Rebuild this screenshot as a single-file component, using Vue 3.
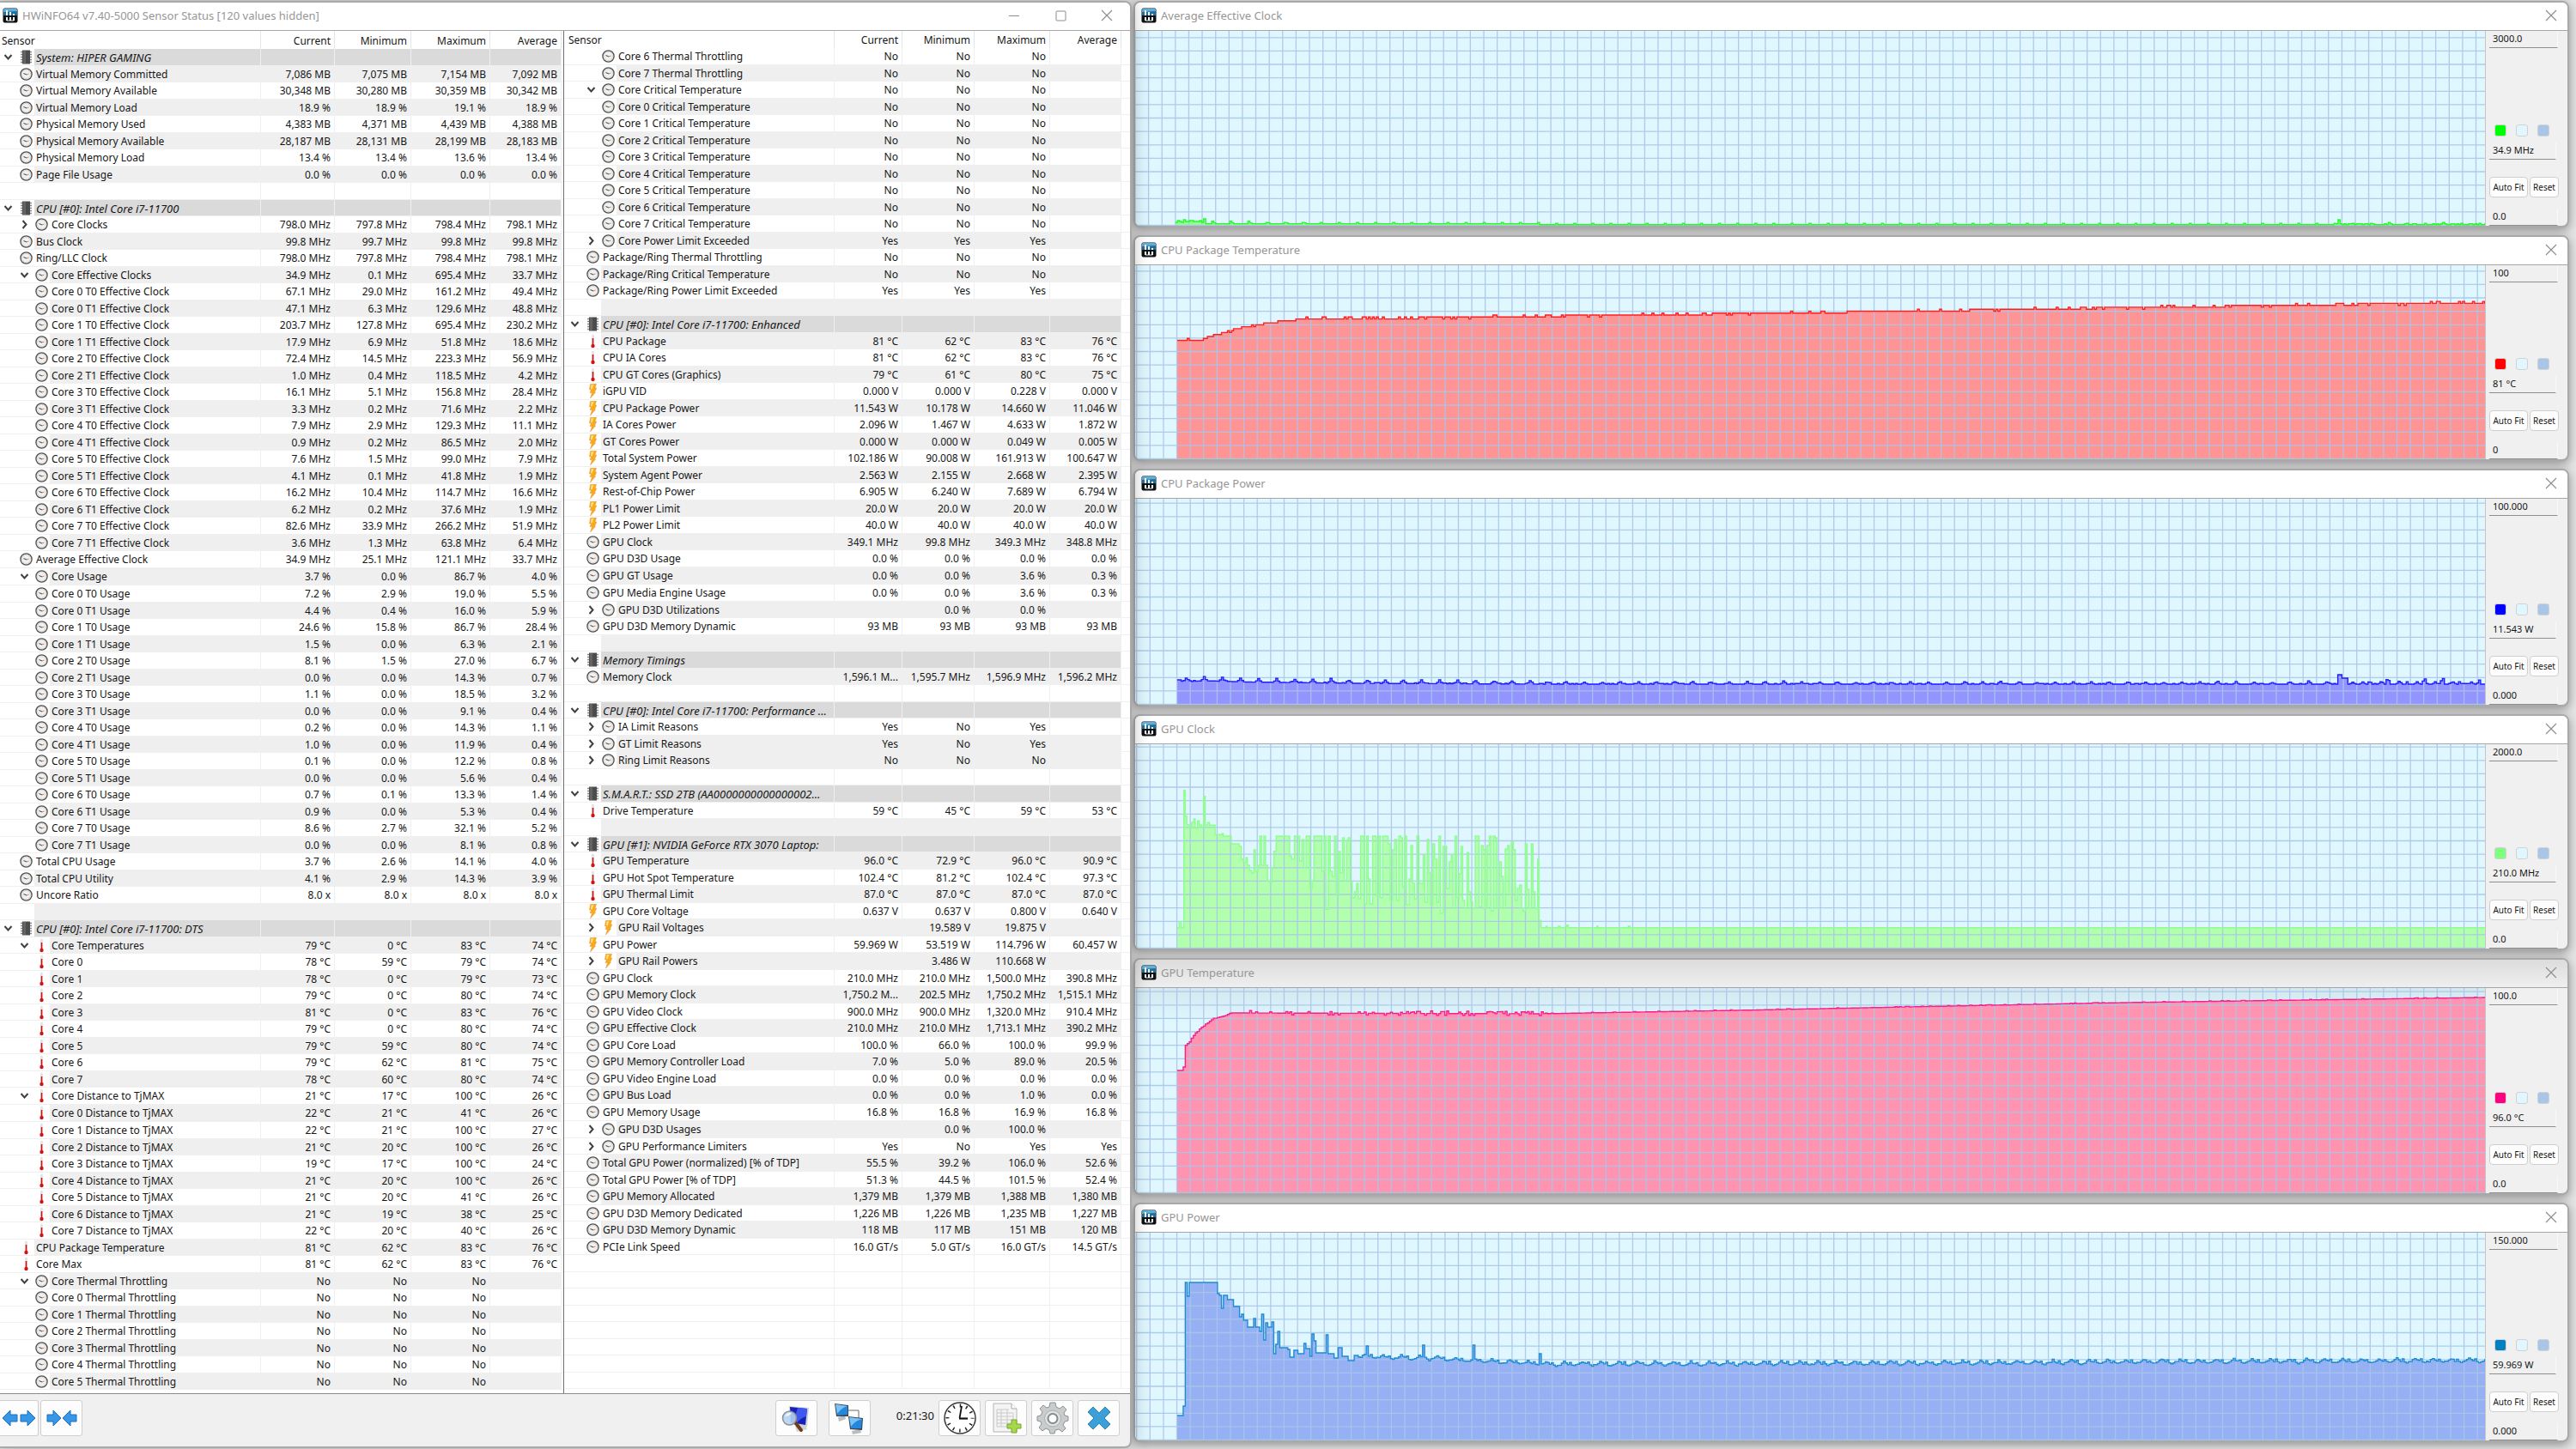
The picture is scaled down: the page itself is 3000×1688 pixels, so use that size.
<script setup>
import { h } from 'vue'

// Row notation: kind|name|current|minimum|maximum|average
// kind: H = sensor group, c/t/b = clock, thermometer, bolt icon,
// with a suffix for second-level rows: "+" leaf, ">" collapsed, "v" expanded
const leftSource = `H|System: HIPER GAMING
c|Virtual Memory Committed|7,086 MB|7,075 MB|7,154 MB|7,092 MB
c|Virtual Memory Available|30,348 MB|30,280 MB|30,359 MB|30,342 MB
c|Virtual Memory Load|18.9 %|18.9 %|19.1 %|18.9 %
c|Physical Memory Used|4,383 MB|4,371 MB|4,439 MB|4,388 MB
c|Physical Memory Available|28,187 MB|28,131 MB|28,199 MB|28,183 MB
c|Physical Memory Load|13.4 %|13.4 %|13.6 %|13.4 %
c|Page File Usage|0.0 %|0.0 %|0.0 %|0.0 %

H|CPU [#0]: Intel Core i7-11700
c>|Core Clocks|798.0 MHz|797.8 MHz|798.4 MHz|798.1 MHz
c|Bus Clock|99.8 MHz|99.7 MHz|99.8 MHz|99.8 MHz
c|Ring/LLC Clock|798.0 MHz|797.8 MHz|798.4 MHz|798.1 MHz
cv|Core Effective Clocks|34.9 MHz|0.1 MHz|695.4 MHz|33.7 MHz
c+|Core 0 T0 Effective Clock|67.1 MHz|29.0 MHz|161.2 MHz|49.4 MHz
c+|Core 0 T1 Effective Clock|47.1 MHz|6.3 MHz|129.6 MHz|48.8 MHz
c+|Core 1 T0 Effective Clock|203.7 MHz|127.8 MHz|695.4 MHz|230.2 MHz
c+|Core 1 T1 Effective Clock|17.9 MHz|6.9 MHz|51.8 MHz|18.6 MHz
c+|Core 2 T0 Effective Clock|72.4 MHz|14.5 MHz|223.3 MHz|56.9 MHz
c+|Core 2 T1 Effective Clock|1.0 MHz|0.4 MHz|118.5 MHz|4.2 MHz
c+|Core 3 T0 Effective Clock|16.1 MHz|5.1 MHz|156.8 MHz|28.4 MHz
c+|Core 3 T1 Effective Clock|3.3 MHz|0.2 MHz|71.6 MHz|2.2 MHz
c+|Core 4 T0 Effective Clock|7.9 MHz|2.9 MHz|129.3 MHz|11.1 MHz
c+|Core 4 T1 Effective Clock|0.9 MHz|0.2 MHz|86.5 MHz|2.0 MHz
c+|Core 5 T0 Effective Clock|7.6 MHz|1.5 MHz|99.0 MHz|7.9 MHz
c+|Core 5 T1 Effective Clock|4.1 MHz|0.1 MHz|41.8 MHz|1.9 MHz
c+|Core 6 T0 Effective Clock|16.2 MHz|10.4 MHz|114.7 MHz|16.6 MHz
c+|Core 6 T1 Effective Clock|6.2 MHz|0.2 MHz|37.6 MHz|1.9 MHz
c+|Core 7 T0 Effective Clock|82.6 MHz|33.9 MHz|266.2 MHz|51.9 MHz
c+|Core 7 T1 Effective Clock|3.6 MHz|1.3 MHz|63.8 MHz|6.4 MHz
c|Average Effective Clock|34.9 MHz|25.1 MHz|121.1 MHz|33.7 MHz
cv|Core Usage|3.7 %|0.0 %|86.7 %|4.0 %
c+|Core 0 T0 Usage|7.2 %|2.9 %|19.0 %|5.5 %
c+|Core 0 T1 Usage|4.4 %|0.4 %|16.0 %|5.9 %
c+|Core 1 T0 Usage|24.6 %|15.8 %|86.7 %|28.4 %
c+|Core 1 T1 Usage|1.5 %|0.0 %|6.3 %|2.1 %
c+|Core 2 T0 Usage|8.1 %|1.5 %|27.0 %|6.7 %
c+|Core 2 T1 Usage|0.0 %|0.0 %|14.3 %|0.7 %
c+|Core 3 T0 Usage|1.1 %|0.0 %|18.5 %|3.2 %
c+|Core 3 T1 Usage|0.0 %|0.0 %|9.1 %|0.4 %
c+|Core 4 T0 Usage|0.2 %|0.0 %|14.3 %|1.1 %
c+|Core 4 T1 Usage|1.0 %|0.0 %|11.9 %|0.4 %
c+|Core 5 T0 Usage|0.1 %|0.0 %|12.2 %|0.8 %
c+|Core 5 T1 Usage|0.0 %|0.0 %|5.6 %|0.4 %
c+|Core 6 T0 Usage|0.7 %|0.1 %|13.3 %|1.4 %
c+|Core 6 T1 Usage|0.9 %|0.0 %|5.3 %|0.4 %
c+|Core 7 T0 Usage|8.6 %|2.7 %|32.1 %|5.2 %
c+|Core 7 T1 Usage|0.0 %|0.0 %|8.1 %|0.8 %
c|Total CPU Usage|3.7 %|2.6 %|14.1 %|4.0 %
c|Total CPU Utility|4.1 %|2.9 %|14.3 %|3.9 %
c|Uncore Ratio|8.0 x|8.0 x|8.0 x|8.0 x

H|CPU [#0]: Intel Core i7-11700: DTS
tv|Core Temperatures|79 °C|0 °C|83 °C|74 °C
t+|Core 0|78 °C|59 °C|79 °C|74 °C
t+|Core 1|78 °C|0 °C|79 °C|73 °C
t+|Core 2|79 °C|0 °C|80 °C|74 °C
t+|Core 3|81 °C|0 °C|83 °C|76 °C
t+|Core 4|79 °C|0 °C|80 °C|74 °C
t+|Core 5|79 °C|59 °C|80 °C|74 °C
t+|Core 6|79 °C|62 °C|81 °C|75 °C
t+|Core 7|78 °C|60 °C|80 °C|74 °C
tv|Core Distance to TjMAX|21 °C|17 °C|100 °C|26 °C
t+|Core 0 Distance to TjMAX|22 °C|21 °C|41 °C|26 °C
t+|Core 1 Distance to TjMAX|22 °C|21 °C|100 °C|27 °C
t+|Core 2 Distance to TjMAX|21 °C|20 °C|100 °C|26 °C
t+|Core 3 Distance to TjMAX|19 °C|17 °C|100 °C|24 °C
t+|Core 4 Distance to TjMAX|21 °C|20 °C|100 °C|26 °C
t+|Core 5 Distance to TjMAX|21 °C|20 °C|41 °C|26 °C
t+|Core 6 Distance to TjMAX|21 °C|19 °C|38 °C|25 °C
t+|Core 7 Distance to TjMAX|22 °C|20 °C|40 °C|26 °C
t|CPU Package Temperature|81 °C|62 °C|83 °C|76 °C
t|Core Max|81 °C|62 °C|83 °C|76 °C
cv|Core Thermal Throttling|No|No|No|
c+|Core 0 Thermal Throttling|No|No|No|
c+|Core 1 Thermal Throttling|No|No|No|
c+|Core 2 Thermal Throttling|No|No|No|
c+|Core 3 Thermal Throttling|No|No|No|
c+|Core 4 Thermal Throttling|No|No|No|
c+|Core 5 Thermal Throttling|No|No|No|`

const rightSource = `c+|Core 6 Thermal Throttling|No|No|No|
c+|Core 7 Thermal Throttling|No|No|No|
cv|Core Critical Temperature|No|No|No|
c+|Core 0 Critical Temperature|No|No|No|
c+|Core 1 Critical Temperature|No|No|No|
c+|Core 2 Critical Temperature|No|No|No|
c+|Core 3 Critical Temperature|No|No|No|
c+|Core 4 Critical Temperature|No|No|No|
c+|Core 5 Critical Temperature|No|No|No|
c+|Core 6 Critical Temperature|No|No|No|
c+|Core 7 Critical Temperature|No|No|No|
c>|Core Power Limit Exceeded|Yes|Yes|Yes|
c|Package/Ring Thermal Throttling|No|No|No|
c|Package/Ring Critical Temperature|No|No|No|
c|Package/Ring Power Limit Exceeded|Yes|Yes|Yes|

H|CPU [#0]: Intel Core i7-11700: Enhanced
t|CPU Package|81 °C|62 °C|83 °C|76 °C
t|CPU IA Cores|81 °C|62 °C|83 °C|76 °C
t|CPU GT Cores (Graphics)|79 °C|61 °C|80 °C|75 °C
b|iGPU VID|0.000 V|0.000 V|0.228 V|0.000 V
b|CPU Package Power|11.543 W|10.178 W|14.660 W|11.046 W
b|IA Cores Power|2.096 W|1.467 W|4.633 W|1.872 W
b|GT Cores Power|0.000 W|0.000 W|0.049 W|0.005 W
b|Total System Power|102.186 W|90.008 W|161.913 W|100.647 W
b|System Agent Power|2.563 W|2.155 W|2.668 W|2.395 W
b|Rest-of-Chip Power|6.905 W|6.240 W|7.689 W|6.794 W
b|PL1 Power Limit|20.0 W|20.0 W|20.0 W|20.0 W
b|PL2 Power Limit|40.0 W|40.0 W|40.0 W|40.0 W
c|GPU Clock|349.1 MHz|99.8 MHz|349.3 MHz|348.8 MHz
c|GPU D3D Usage|0.0 %|0.0 %|0.0 %|0.0 %
c|GPU GT Usage|0.0 %|0.0 %|3.6 %|0.3 %
c|GPU Media Engine Usage|0.0 %|0.0 %|3.6 %|0.3 %
c>|GPU D3D Utilizations||0.0 %|0.0 %|
c|GPU D3D Memory Dynamic|93 MB|93 MB|93 MB|93 MB

H|Memory Timings
c|Memory Clock|1,596.1 M...|1,595.7 MHz|1,596.9 MHz|1,596.2 MHz

H|CPU [#0]: Intel Core i7-11700: Performance ...
c>|IA Limit Reasons|Yes|No|Yes|
c>|GT Limit Reasons|Yes|No|Yes|
c>|Ring Limit Reasons|No|No|No|

H|S.M.A.R.T.: SSD 2TB (AA0000000000000002...
t|Drive Temperature|59 °C|45 °C|59 °C|53 °C

H|GPU [#1]: NVIDIA GeForce RTX 3070 Laptop:
t|GPU Temperature|96.0 °C|72.9 °C|96.0 °C|90.9 °C
t|GPU Hot Spot Temperature|102.4 °C|81.2 °C|102.4 °C|97.3 °C
t|GPU Thermal Limit|87.0 °C|87.0 °C|87.0 °C|87.0 °C
b|GPU Core Voltage|0.637 V|0.637 V|0.800 V|0.640 V
b>|GPU Rail Voltages||19.589 V|19.875 V|
b|GPU Power|59.969 W|53.519 W|114.796 W|60.457 W
b>|GPU Rail Powers||3.486 W|110.668 W|
c|GPU Clock|210.0 MHz|210.0 MHz|1,500.0 MHz|390.8 MHz
c|GPU Memory Clock|1,750.2 M...|202.5 MHz|1,750.2 MHz|1,515.1 MHz
c|GPU Video Clock|900.0 MHz|900.0 MHz|1,320.0 MHz|910.4 MHz
c|GPU Effective Clock|210.0 MHz|210.0 MHz|1,713.1 MHz|390.2 MHz
c|GPU Core Load|100.0 %|66.0 %|100.0 %|99.9 %
c|GPU Memory Controller Load|7.0 %|5.0 %|89.0 %|20.5 %
c|GPU Video Engine Load|0.0 %|0.0 %|0.0 %|0.0 %
c|GPU Bus Load|0.0 %|0.0 %|1.0 %|0.0 %
c|GPU Memory Usage|16.8 %|16.8 %|16.9 %|16.8 %
c>|GPU D3D Usages||0.0 %|100.0 %|
c>|GPU Performance Limiters|Yes|No|Yes|Yes
c|Total GPU Power (normalized) [% of TDP]|55.5 %|39.2 %|106.0 %|52.6 %
c|Total GPU Power [% of TDP]|51.3 %|44.5 %|101.5 %|52.4 %
c|GPU Memory Allocated|1,379 MB|1,379 MB|1,388 MB|1,380 MB
c|GPU D3D Memory Dedicated|1,226 MB|1,226 MB|1,235 MB|1,227 MB
c|GPU D3D Memory Dynamic|118 MB|117 MB|151 MB|120 MB
c|PCIe Link Speed|16.0 GT/s|5.0 GT/s|16.0 GT/s|14.5 GT/s`

const ROWS = 80

// flipAt: row number from which the zebra striping is inverted (a hidden row sits there)
function parse(source, flipAt) {
  const rows = source.split('\n').map((line, i) => {
    const [kind = '', name = '', ...values] = line.split('|')
    const n = i + 1
    const even = n % 2 === 0
    while (values.length < 4) values.push('')
    return {
      group: kind === 'H',
      icon: { H: 'chip', c: 'clock', t: 'thermo', b: 'bolt' }[kind[0]] || '',
      nested: kind.length > 1,
      arrow: kind === 'H' || kind[1] === 'v' ? 'down' : kind[1] === '>' ? 'right' : '',
      name,
      values,
      striped: n >= flipAt ? !even : even,
    }
  })
  while (rows.length < ROWS) {
    rows.push({ group: false, icon: '', nested: false, arrow: '', name: '', values: ['', '', '', ''], striped: false })
  }
  return rows
}

const panes = [
  { id: 'left', rows: parse(leftSource, 999) },
  { id: 'right', rows: parse(rightSource, 43) },
]
const headings = ['Current', 'Minimum', 'Maximum', 'Average']

/* ---- graph traces ---- */
const PLOT_W = 1573
const CELL = 15.625
const STEP = 2.344

let seed = 7
function rand() {
  seed = (seed * 16807) % 2147483647
  return seed / 2147483647
}

function lerp(points, x) {
  for (let i = 1; i < points.length; i++) {
    const [x0, y0] = points[i - 1]
    const [x1, y1] = points[i]
    if (x <= x1) return y0 + ((y1 - y0) * (x - x0)) / (x1 - x0)
  }
  return points[points.length - 1][1]
}

function hold(steps, x) {
  let v = steps[0][1]
  for (const [sx, sv] of steps) {
    if (sx > x) break
    v = sv
  }
  return v
}

function sample(from, fn) {
  const out = []
  for (let i = 0, x = from; x < PLOT_W; i++, x = from + i * STEP) out.push([x, fn(x, i)])
  return out
}

const avgClock = sample(47, (x, i) => {
  if (x < 82) return x > 78 ? 8 : 4 + Math.round(rand() * 2) + (i === 4 ? 2 : 0)
  if (x > 1401 && x < 1404) return 7
  const base = x < 470 ? 2.4 : 1.2
  const peak = i % 9 === 0 ? (x < 150 ? 3 : 1.5) : 0
  return base + (i % 9 === 1 && x < 200 ? 1 : peak) + (x > 1395 && rand() > 0.6 ? 1 : 0)
})

const packageTemp = sample(49, (x) => {
  const base = lerp([[49, 61], [78, 61.2], [95, 64], [127, 68], [159, 70.2], [205, 72.4], [330, 72.5], [500, 73.5], [690, 74.6], [900, 76], [1100, 77.4], [1300, 78.7], [1500, 80], [1573, 80]], x)
  return Math.round(base + (rand() > 0.78 ? 0.5 : 0) - (rand() > 0.85 ? 0.4 : 0)) * 2.27
})

const packagePower = sample(49, (x, i) => {
  if (x < 52) return 29
  const base = lerp([[49, 26.5], [80, 28], [130, 26.5], [250, 25], [480, 24], [1573, 24]], x)
  const phase = i % 9
  const bump = phase === 4 ? 3 + rand() * 2 : phase === 5 || phase === 3 ? 1.5 : 0
  if (x > 1401 && x < 1404) return 35
  if (x > 1404 && x < 1412) return 31
  if (x > 1412 && phase > 6) return base + rand() * 7
  return base + (x > 480 ? bump * 0.6 : bump) + (rand() > 0.8 ? 0.8 : 0)
})

// Burst phase of the GPU clock: [time, level] in thirds of a unit, level counted down from 1003
const clockBurst = [
  [33, 930], [40, 910], [47, 930], [56, 450], [61, 540], [67, 571], [75, 583], [83, 562], [91, 550], [96, 583],
  [104, 557], [110, 571], [118, 577], [125, 471], [131, 572], [139, 563], [146, 572], [166, 605], [190, 601],
  [194, 610], [222, 637], [250, 646], [257, 690], [264, 700], [273, 685], [278, 712], [286, 730], [293, 739],
  [301, 658], [307, 733], [315, 712], [322, 610], [328, 712], [336, 610], [342, 712], [349, 766], [356, 772],
  [364, 723], [371, 663], [379, 610], [426, 680], [433, 691], [443, 610], [461, 697], [469, 622], [476, 721],
  [484, 610], [497, 793], [505, 766], [511, 610], [539, 733], [547, 610], [553, 866], [561, 610], [568, 733],
  [575, 751], [583, 610], [589, 814], [597, 664], [603, 739], [611, 616], [617, 766], [625, 625], [631, 616],
  [638, 772], [645, 825], [653, 804], [660, 775], [666, 829], [674, 610], [687, 847], [695, 610], [701, 760],
  [707, 847], [716, 610], [729, 817], [737, 610], [743, 825], [751, 610], [770, 637], [778, 835], [786, 658],
  [793, 622], [800, 835], [808, 610], [815, 616], [821, 787], [829, 610], [835, 850], [844, 760], [850, 643],
  [856, 775], [863, 829], [871, 610], [878, 775], [893, 676], [899, 841], [907, 622], [913, 739], [919, 850],
  [927, 637], [933, 691], [941, 841], [948, 610], [954, 880], [962, 646], [975, 793], [984, 700], [991, 676],
  [997, 862], [1004, 610], [1010, 825], [1018, 742], [1025, 646], [1031, 835], [1038, 862], [1046, 668],
  [1052, 804], [1059, 841], [1066, 862], [1075, 610], [1088, 856], [1097, 643], [1103, 658], [1110, 862],
  [1116, 643], [1124, 610], [1130, 872], [1138, 610], [1144, 616], [1151, 862], [1159, 700], [1166, 751],
  [1173, 862], [1180, 655], [1188, 643], [1194, 814], [1201, 631], [1208, 658], [1215, 835], [1222, 793],
  [1230, 781], [1237, 862], [1242, 872], [1250, 637], [1256, 796], [1263, 862], [1271, 637], [1277, 804],
  [1284, 862], [1293, 691], [1298, 905], [1305, 930], [1323, 925], [1326, 930], [1365, 925], [1372, 930],
  [1390, 925], [1394, 921], [1400, 930], [1500, 925], [1504, 930], [1610, 925], [1616, 930],
]
const gpuClock = clockBurst.map(([x, y]) => [38 + x / 3, (1003 - y) / 3])

const gpuTemp = sample(49, (x) => {
  if (x < 58) return x < 56 ? 143 : 147
  const base = lerp([[58, 172], [64, 177], [66, 182], [75, 191], [90, 203], [105, 207], [111, 210], [470, 209], [700, 213], [1150, 222], [1573, 228]], x)
  const noise = x > 130 && x < 475 ? (rand() > 0.75 ? 1 + rand() * 2 : rand() > 0.85 ? -2 : 0) : rand() > 0.85 ? 0.6 : 0
  return base + noise
})

const powerStart = [
  [49, 29], [56, 40], [58, 184], [61, 168], [63, 184], [96, 171], [98, 169], [101, 154], [103, 169], [108, 164],
  [114, 156], [121, 151], [122, 144], [125, 147], [127, 140], [130, 132], [138, 142], [141, 132], [144, 127],
  [148, 147], [150, 117], [152, 137], [155, 132], [158, 138], [161, 101], [164, 112], [167, 127], [169, 108],
  [178, 106], [181, 97], [184, 105], [190, 101], [197, 113], [200, 107], [203, 98], [206, 124], [208, 116],
  [211, 102], [222, 123], [225, 101], [231, 96], [237, 108], [242, 98], [248, 93], [254, 108], [256, 99],
]
const gpuPower = sample(49, (x, i) => {
  if (x < 258) return hold(powerStart, x + 1)
  if (Math.abs(x - 268.5) < 1.2) return 110
  if (Math.abs(x - 336) < 1.2 || Math.abs(x - 394.5) < 1.2) return 111
  if (Math.abs(x - 472) < 1.2) return 101
  const base = lerp([[258, 96], [350, 93.5], [480, 87], [900, 88], [1250, 90], [1573, 91]], x)
  const wave = [0, 0.5, 2, 4, 2.5, 1, 3, 0, -1][i % 9]
  return base + wave + rand() * 1.6
})

function trace(steps, height) {
  let d = `M${steps[0][0].toFixed(1)} ${(height - steps[0][1]).toFixed(1)}`
  for (const [x, v] of steps.slice(1)) d += `H${x.toFixed(1)}V${(height - v).toFixed(1)}`
  return `${d}H${PLOT_W}`
}

function gridPath(height, offset) {
  let d = ''
  for (let x = offset; x < PLOT_W; x += CELL) d += `M${x.toFixed(1)} 0V${height}`
  for (let y = height - 0.5; y > 0; y -= CELL) d += `M0 ${y.toFixed(1)}H${PLOT_W}`
  return d
}

function graph(title, height, steps, offset, colors, top, value, bottom) {
  const line = trace(steps, height)
  return {
    title, height, top, value, bottom, ...colors,
    line,
    area: `${line}V${height}H${steps[0][0]}Z`,
    grid: gridPath(height, offset),
  }
}

const graphs = [
  graph('Average Effective Clock', 227, avgClock, 0, { swatch: '#00ff00', stroke: '#1eff1e', fill: '#94ff94' }, '3000.0', '34.9 MHz', '0.0'),
  graph('CPU Package Temperature', 226, packageTemp, 1.7, { swatch: '#ff0000', stroke: '#ff1e1e', fill: '#ff9494' }, '100', '81 °C', '0'),
  graph('CPU Package Power', 240, packagePower, 1.7, { swatch: '#0000ff', stroke: '#1e1eff', fill: '#9494ff' }, '100.000', '11.543 W', '0.000'),
  graph('GPU Clock', 238, gpuClock, 1.7, { swatch: '#80ff80', stroke: '#8eff8e', fill: '#b2ffae' }, '2000.0', '210.0 MHz', '0.0'),
  graph('GPU Temperature', 239, gpuTemp, 1.7, { swatch: '#ff0080', stroke: '#fa1e8c', fill: '#ff94b0', dim: true }, '100.0', '96.0 °C', '0.0'),
  graph('GPU Power', 242, gpuPower, 1.7, { swatch: '#0080c0', stroke: '#1e8cd2', fill: '#96b0f4' }, '150.000', '59.969 W', '0.000'),
]

/* ---- small shared glyphs ---- */
const AppIcon = () =>
  h('svg', { width: 18, height: 18, viewBox: '0 0 18 18', 'aria-hidden': 'true' }, [
    h('rect', { x: 0.5, y: 0.5, width: 17, height: 17, rx: 2, fill: '#0d1114' }),
    h('path', { d: 'M1 9V2.5Q1 1 2.5 1H15.5Q17 1 17 2.5V9Z', fill: '#1d6f9e' }),
    h('path', { d: 'M1 5V2.5Q1 1 2.5 1H15.5Q17 1 17 2.5V4Z', fill: '#5fb0d8' }),
    h('path', { d: 'M5 3V9M9 5V9M13 7V9M5 11V15M9 11V15M13 11V15', stroke: '#fff', 'stroke-width': 2 }),
    h('path', { d: 'M5 11V15H13', stroke: '#dfe6ea', 'stroke-width': 1, fill: 'none' }),
  ])

const CloseGlyph = () =>
  h('svg', { width: 14, height: 14, viewBox: '0 0 14 14', 'aria-hidden': 'true' }, [
    h('path', { d: 'M1 1L13 13M13 1L1 13', stroke: '#8c8c8c', 'stroke-width': 1.1 }),
  ])
</script>

<template>
  <div class="desktop">
    <main class="window main">
      <header class="titlebar">
        <AppIcon />
        <h1>HWiNFO64 v7.40-5000 Sensor Status [120 values hidden]</h1>
        <div class="controls">
          <button type="button" aria-label="Minimize">
            <svg width="13" height="13" viewBox="0 0 13 13"><path d="M0 6.5H12" stroke="#8c8c8c" /></svg>
          </button>
          <button type="button" aria-label="Maximize">
            <svg width="13" height="13" viewBox="0 0 13 13"><rect x="1" y="1" width="11" height="11" rx="1" fill="none" stroke="#8c8c8c" /></svg>
          </button>
          <button type="button" aria-label="Close"><CloseGlyph /></button>
        </div>
      </header>

      <div class="panes">
        <section v-for="pane in panes" :key="pane.id" class="pane" :class="pane.id">
          <table>
            <colgroup>
              <col />
              <col class="c-current" />
              <col class="c-minimum" />
              <col class="c-maximum" />
              <col class="c-average" />
              <col class="c-rest" />
            </colgroup>
            <thead>
              <tr>
                <th scope="col" class="first">Sensor</th>
                <th v-for="t in headings" :key="t" scope="col">{{ t }}</th>
                <td></td>
              </tr>
            </thead>
            <tbody>
              <tr v-for="(row, i) in pane.rows" :key="i" :class="{ group: row.group, striped: row.striped, nested: row.nested }">
                <td class="name">
                  <div class="cell">
                    <div class="tree">
                      <span class="arrow">
                        <svg v-if="row.arrow === 'down'" width="11" height="11" viewBox="0 0 11 11"><path d="M1.5 3L5.5 7.5L9.5 3" fill="none" stroke="#404040" stroke-width="2" /></svg>
                        <svg v-if="row.arrow === 'right'" width="11" height="11" viewBox="0 0 11 11"><path d="M3.5 1L7.5 5.5L3.5 10" fill="none" stroke="#404040" stroke-width="2" /></svg>
                      </span>
                      <svg v-if="row.icon === 'chip'" class="icon" width="15" height="17" viewBox="0 0 15 17">
                        <path d="M1 2.5H14M1 5.5H14M1 8.5H14M1 11.5H14M1 14.5H14" stroke="#8a8a8a" stroke-width="1.4" />
                        <rect x="3" y="0.5" width="9" height="16" fill="#4c4c4c" />
                        <rect x="4" y="1" width="3" height="15" fill="#646464" />
                      </svg>
                      <svg v-else-if="row.icon === 'clock'" class="icon" width="15" height="15" viewBox="0 0 15 15">
                        <circle cx="7.5" cy="7.5" r="6.6" fill="#f1f1ef" stroke="#4e4e4e" stroke-width="1.3" />
                        <circle cx="7.5" cy="7.5" r="5" fill="none" stroke="#cfcfcf" stroke-width="0.8" />
                        <path d="M4.5 6.5L8 8" stroke="#555" stroke-width="1.1" />
                        <path d="M8 8L10.5 7" stroke="#d08060" stroke-width="1" />
                      </svg>
                      <svg v-else-if="row.icon === 'thermo'" class="icon" width="15" height="17" viewBox="0 0 15 17">
                        <rect x="6" y="0.5" width="3" height="12" rx="1.5" fill="#e4e4e4" />
                        <rect x="6.7" y="5" width="1.6" height="9" fill="#d01414" />
                        <circle cx="7.5" cy="14" r="2.2" fill="#d01414" />
                      </svg>
                      <svg v-else-if="row.icon === 'bolt'" class="icon" width="15" height="17" viewBox="0 0 15 17">
                        <path d="M4.5 0.5L11.5 0L10 5L11.8 5L9.5 10H10.5L4.5 17L6.5 10.5L4 10.5L5.5 7H3.5Z" fill="#fba81c" stroke="#d99a3a" stroke-width="0.5" />
                        <path d="M5.5 1.5L8.5 1L6.5 6.5L5 6Z" fill="#ffe27a" />
                      </svg>
                    </div>
                    <span class="label">{{ row.name }}</span>
                  </div>
                </td>
                <td v-for="(v, j) in row.values" :key="j" class="num">{{ v }}</td>
                <td class="rest"></td>
              </tr>
            </tbody>
          </table>
        </section>
      </div>

      <footer class="toolbar">
        <button type="button" class="tool edge" aria-label="Expand columns">
          <svg width="40" height="24" viewBox="0 0 40 24"><path d="M1 12L10 3V8H18V16H10V21ZM39 12L30 3V8H22V16H30V21Z" fill="#3796e6" stroke="#1f6fbf" /></svg>
        </button>
        <button type="button" class="tool" aria-label="Shrink columns">
          <svg width="40" height="24" viewBox="0 0 40 24"><path d="M19 12L10 3V8H3V16H10V21ZM21 12L30 3V8H37V16H30V21Z" fill="#3796e6" stroke="#1f6fbf" /></svg>
        </button>
        <span class="spring"></span>
        <button type="button" class="tool" aria-label="System summary">
          <svg width="34" height="34" viewBox="0 0 34 34">
            <path d="M16 27L28 25L30 30L18 33Z" fill="#d3d3d3" />
            <path d="M9 3L32 5L30 27L10 24Z" fill="#cfd2d6" />
            <path d="M10 4L30 6L28 25L11 22Z" fill="#1420b8" />
            <path d="M19 5L30 6L29 15Q22 17 18 23L14 22Z" fill="#3f58ee" />
            <path d="M16 22L23 31" stroke="#6e3d1a" stroke-width="4" stroke-linecap="round" />
            <circle cx="9.5" cy="17" r="8" fill="#b6d3f0" fill-opacity="0.9" stroke="#8b9097" stroke-width="1.5" />
            <path d="M4 15Q7 10 12 11Q9 15 4 15Z" fill="#eef6fd" />
          </svg>
        </button>
        <button type="button" class="tool remote" aria-label="Remote monitoring">
          <svg width="38" height="38" viewBox="0 0 38 38">
            <path d="M16 10H30V22" fill="none" stroke="#6a6a6a" />
            <path d="M6 18L14 16L15 20L7 23Z" fill="#b9bcc0" />
            <path d="M2 2L18 4V17L4 17Z" fill="#3c4652" />
            <path d="M3 3L17 5V15L5 16Z" fill="#2387dc" />
            <path d="M3 3L17 5Q10 7 5 14Z" fill="#7cc0f5" />
            <path d="M22 34L32 32L33 36L23 38Z" fill="#b9bcc0" />
            <path d="M18 17L35 19L34 33L20 32Z" fill="#3c4652" />
            <path d="M19 18L34 20L33 31L21 31Z" fill="#2387dc" />
            <path d="M19 18L34 20Q26 22 21 29Z" fill="#7cc0f5" />
          </svg>
        </button>
        <time class="elapsed">0:21:30</time>
        <button type="button" class="tool" aria-label="Reset clock">
          <svg width="40" height="40" viewBox="0 0 40 40">
            <circle cx="20" cy="20" r="18" fill="#fff" stroke="#3a3a3a" stroke-width="1.5" />
            <circle cx="20" cy="20" r="14.5" fill="none" stroke="#222" stroke-width="4" stroke-dasharray="1.5 6.092" stroke-dashoffset="0.75" />
            <path d="M19.5 20L22 6" stroke="#111" stroke-width="1.8" />
            <path d="M19 20.5H29" stroke="#111" stroke-width="2.2" />
          </svg>
        </button>
        <button type="button" class="tool" aria-label="Logging start">
          <svg width="36" height="38" viewBox="0 0 36 38">
            <path d="M3 2H24L30 8V35H3Z" fill="#f4f4f4" stroke="#b4b4b4" />
            <path d="M24 2V8H30" fill="#fff" stroke="#a8a8a8" />
            <path d="M7 9H21M7 13H26M7 17H26M7 21H26M7 25H26M7 29H20M7 9V29M12 9V29M19 9V29M26 13V25" stroke="#c9c9c9" fill="none" />
            <path d="M24 21H30V26H35V31H30V36H24V31H19V26H24Z" fill="#a6d84a" stroke="#74a82c" />
          </svg>
        </button>
        <button type="button" class="tool" aria-label="Configure sensors">
          <svg width="38" height="38" viewBox="0 0 38 38">
            <path d="M16 1H22L23 6L27 8L31 5L35 9L32 13L33 16L37 17V22L33 23L31 27L34 31L30 35L26 32L22 33L21 37H16L15 33L11 31L7 34L3 30L6 26L5 23L1 22V17L5 16L7 12L4 8L8 4L12 7L15 6Z" fill="#c9cccd" stroke="#8d9194" />
            <circle cx="19" cy="19.5" r="9.5" fill="#dfe1e2" stroke="#aaadb0" />
            <circle cx="19" cy="19.5" r="5.5" fill="#fff" stroke="#85898c" stroke-width="2" />
          </svg>
        </button>
        <button type="button" class="tool" aria-label="Close sensors">
          <svg width="30" height="30" viewBox="0 0 30 30"><path d="M8 2L15 9L22 2L28 8L21 15L28 22L22 28L15 21L8 28L2 22L9 15L2 8Z" fill="#3ba0d8" stroke="#2b82b8" /></svg>
        </button>
      </footer>
    </main>

    <div class="graphs">
      <section v-for="g in graphs" :key="g.title" class="window graph" :class="{ dim: g.dim }">
        <header class="titlebar">
          <AppIcon />
          <h2>{{ g.title }}</h2>
          <div class="controls">
            <button type="button" :aria-label="'Close ' + g.title"><CloseGlyph /></button>
          </div>
        </header>
        <div class="body">
          <div class="plot">
            <svg width="100%" :height="g.height" :viewBox="`0 0 1573 ${g.height}`" preserveAspectRatio="none" role="img" :aria-label="g.title">
              <path :d="g.area" :fill="g.fill" />
              <path :d="g.grid" class="grid" />
              <path :d="g.line" fill="none" :stroke="g.stroke" stroke-width="1.4" />
            </svg>
          </div>
          <aside class="side">
            <input type="text" :value="g.top" :aria-label="g.title + ' scale maximum'" />
            <span class="spring"></span>
            <div class="swatches">
              <button type="button" aria-label="Line colour" :style="{ backgroundColor: g.swatch }"></button>
              <button type="button" aria-label="Background colour" class="paper"></button>
              <button type="button" aria-label="Grid colour" class="lines"></button>
            </div>
            <input type="text" class="value" readonly :value="g.value" :aria-label="g.title + ' current value'" />
            <div class="actions">
              <button type="button" class="fit">Auto Fit</button>
              <button type="button" class="reset">Reset</button>
            </div>
            <input type="text" :value="g.bottom" :aria-label="g.title + ' scale minimum'" />
          </aside>
        </div>
      </section>
    </div>
  </div>
</template>

<style>
body {
  margin: 0;
  background: #e4e4e4;
}
</style>

<style scoped>
.desktop {
  display: grid;
  grid-template-columns: 1318fr 1672fr;
  column-gap: 2px;
  align-items: start;
  padding: 1px 8px 8px 0;
  font-family: 'Noto Sans', 'Open Sans', sans-serif;
  font-size: 12px;
  color: #161616;
  overflow: hidden;
}

button,
input {
  font-family: inherit;
  padding: 0;
  margin: 0;
  box-sizing: border-box;
}

svg {
  display: block;
}

.window {
  border: 2px solid #a9a9a9;
  border-radius: 8px;
  background: #f0f0f0;
  overflow: hidden;
  min-width: 0;
}

.titlebar {
  display: flex;
  align-items: center;
  gap: 5px;
  height: 30px;
  padding: 0 0 2px 7px;
  background: #fff;
  border-bottom: 1px solid #a6a6a6;
}

.titlebar h1,
.titlebar h2 {
  margin: 0;
  font-size: 13px;
  font-weight: 400;
  line-height: 20px;
  color: #969696;
  white-space: nowrap;
}

.controls {
  display: flex;
  margin-left: auto;
}

.controls button {
  display: flex;
  justify-content: center;
  align-items: center;
  width: 54px;
  height: 30px;
  border: 0;
  background: none;
}

.graph .controls button {
  width: 38px;
}

/* main window */
.main {
  position: relative;
  z-index: 1;
  border-left: 0;
  border-radius: 0 8px 8px 0;
  box-shadow: 0 0 22px rgba(0, 0, 0, 0.3);
}

.main .titlebar {
  padding-left: 3px;
}

.panes {
  display: grid;
  grid-template-columns: 657fr 659fr;
  border-bottom: 1px solid #8c8c8c;
  background: #fff;
}

.pane {
  min-width: 0;
}

.pane.left {
  --tree: 40px;
  --tree-nested: 58px;
  --arrow: 4px;
  --head: 21px;
  --head-pad: 2px;
  padding-bottom: 4px;
  border-right: 1px solid #6e6e76;
}

.pane.right {
  --tree: 43px;
  --tree-nested: 61px;
  --arrow: 7px;
  --head: 20px;
  --head-pad: 5px;
}

table {
  width: 100%;
  table-layout: fixed;
  border-collapse: separate;
  border-spacing: 0;
}

.left .c-current { width: 86px; }
.left .c-minimum { width: 89px; }
.left .c-maximum { width: 92px; }
.left .c-average { width: 83px; }
.left .c-rest { width: 2px; }
.right .c-current { width: 79px; }
.right .c-minimum { width: 84px; }
.right .c-maximum { width: 88px; }
.right .c-average { width: 83px; }
.right .c-rest { width: 10px; }

th,
td {
  box-sizing: border-box;
  padding: 0;
  overflow: hidden;
  white-space: nowrap;
}

th {
  height: var(--head);
  padding: 2px 4px 0 0;
  border-right: 1px solid #e6e6e6;
  font-weight: 400;
  text-align: right;
  line-height: 16px;
}

th.first {
  padding-left: var(--head-pad);
  text-align: left;
}

tbody tr {
  --row: 19px;
}

tbody tr:nth-child(odd),
tbody tr:nth-child(32n) {
  --row: 20px;
}

tbody td {
  height: var(--row);
  border-bottom: 1px solid #f0f0f0;
  line-height: 16px;
  vertical-align: top;
}

.cell {
  display: flex;
  height: calc(var(--row) - 1px);
}

.name {
  border-right: 1px solid #f0f0f0;
}

.tree {
  display: flex;
  align-items: center;
  width: var(--tree);
  padding-left: var(--arrow);
  box-sizing: border-box;
  flex: none;
}

.nested .tree {
  width: var(--tree-nested);
  padding-left: calc(var(--arrow) + 19px);
}

.arrow {
  width: 19px;
  flex: none;
}

.nested .arrow {
  width: 18px;
}

.icon {
  flex: none;
}

.label {
  flex: 1;
  min-width: 0;
  padding: 2px 0 0 2px;
  overflow: hidden;
}

.num {
  padding: 2px 4px 0 0;
  border-right: 1px solid #f0f0f0;
  text-align: right;
}

.striped .label,
.striped .num {
  background: #efefef;
}

.group .label,
.group .num {
  background: #dadada;
}

.group .label {
  font-size: 13px;
  font-style: italic;
}

.toolbar {
  display: flex;
  align-items: flex-start;
  gap: 5px;
  height: 54px;
  padding: 7px 12px 0 0;
}

.spring {
  flex: 1;
}

.tool {
  display: flex;
  justify-content: center;
  align-items: center;
  width: 49px;
  height: 42px;
  border: 1px solid #cfcfcf;
  border-radius: 3px;
  background: #fdfdfd;
}

.tool.edge {
  width: 45px;
  margin-right: -3px;
  border-left: 0;
  border-radius: 0 3px 3px 0;
}

.tool.remote {
  margin: 0 25px 0 8px;
}

.elapsed {
  font-size: 13px;
  line-height: 36px;
}

/* graph windows */
.graphs {
  display: flex;
  flex-direction: column;
  gap: 9px;
  min-width: 0;
}

.graph {
  box-shadow: 0 3px 12px rgba(0, 0, 0, 0.38);
}

.dim .titlebar {
  background: linear-gradient(#dcdcdc, #efefef);
}

.body {
  display: flex;
}

.plot {
  flex: 1;
  min-width: 0;
  background: #e0f7ff;
}

.dim .plot {
  background: linear-gradient(#d3e8ef, #e0f7ff 40px);
}

.grid {
  fill: none;
  stroke: #a9c5e8;
  stroke-width: 1.3px;
  stroke-opacity: 0.9;
}

.side {
  display: flex;
  flex-direction: column;
  width: 96px;
  padding-left: 4px;
  box-sizing: border-box;
  border-left: 1px solid #c4c4c4;
}

.side input {
  width: 80px;
  height: 20px;
  padding: 0 0 2px 4px;
  border: 0;
  border-right: 1px solid #f8f8f8;
  border-bottom: 1px solid #8e8e8e;
  background: transparent;
  font-size: 11px;
  color: #161616;
}

.side .value {
  width: 78px;
}

.swatches {
  display: flex;
  gap: 11px;
  padding: 0 0 7px 6px;
}

.swatches button {
  width: 14px;
  height: 14px;
  border: 1px solid #d2d2d2;
  border-radius: 3px;
}

.swatches .paper {
  background: #e0f7ff;
}

.swatches .lines {
  background: #a9c5e8;
}

.actions {
  display: flex;
  gap: 2px;
  padding: 20px 0 13px;
}

.actions button {
  height: 24px;
  border: 1px solid #cfcfcf;
  border-radius: 4px;
  background: #fdfdfd;
  font-size: 10px;
  color: #161616;
  white-space: nowrap;
}

.fit {
  width: 45px;
}

.reset {
  width: 34px;
}
</style>
